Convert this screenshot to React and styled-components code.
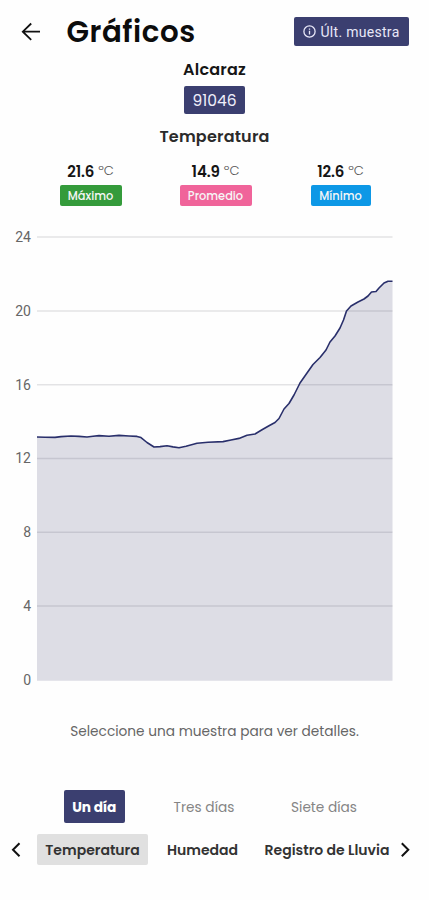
import { useState } from "react";
import styled, { createGlobalStyle } from "styled-components";

const stats = [
    { value: "21.6", label: "Máximo", color: "#349b3b", width: 62 },
    { value: "14.9", label: "Promedio", color: "#f0649a", width: 72 },
    { value: "12.6", label: "Mínimo", color: "#0d98e6", width: 60 },
];

const ranges = [
    { label: "Un día", width: 61.5 },
    { label: "Tres días", width: 77 },
    { label: "Siete días", width: 82 },
];

const sensors = [
    { label: "Temperatura", width: 111 },
    { label: "Humedad", width: 87 },
    { label: "Registro de Lluvia", width: 140 },
];

const ticks = [24, 20, 16, 12, 8, 4, 0];

// [x, y] in chart pixels, the plot is 355.5 x 443.5
const samples = [
    [0, 200], [8, 200.2], [18, 200.4], [24, 199.6], [34, 199], [42, 199.4],
    [50, 200], [56, 199.3], [62, 198.6], [72, 199.2], [82, 198.4], [92, 199],
    [100, 199.4], [104, 200.6], [110, 205.5], [117, 210], [123, 209.6],
    [130, 208.8], [136, 209.9], [142, 210.8], [149, 209.3], [160, 206.2],
    [171, 205.2], [186, 204.6], [194, 203], [202, 201.4], [210, 198.2],
    [218, 197], [225, 192.8], [232, 188.8], [238, 185.5], [242, 181.5],
    [247, 172], [252, 166.5], [257, 158], [263, 146], [270, 136],
    [276, 127.5], [283, 120.5], [289, 113], [293, 105], [298, 99],
    [303, 91], [306.5, 83], [309.5, 74], [314, 69], [321, 65],
    [327, 62], [331, 59], [334.5, 55], [339, 54.5], [342, 51],
    [347, 46], [351, 44.2], [355.5, 44.2],
];

const line = samples.map(([x, y]) => `${x},${y}`).join(" ");

const gridY = (tick) => 442.9 - tick * 18.45;

const Chart = () => (
    <ChartRow>
        <Axis>
            {ticks.map((tick) => <Tick key={tick}>{tick}</Tick>)}
        </Axis>
        <Plot width="356" height="445" viewBox="0 0 356 445">
            <g stroke="#e3e3e5" strokeWidth="1.5">
                {ticks.filter((tick) => tick > 0).map((tick) => (
                    <line key={tick} x1="0" x2="355.5" y1={gridY(tick)} y2={gridY(tick)} />
                ))}
            </g>
            <polygon points={`0,443.7 ${line} 355.5,443.7`} fill="#343869" fillOpacity="0.165" />
            <polyline points={line} fill="none" stroke="#292f6b" strokeWidth="1.6" strokeLinejoin="round" />
        </Plot>
    </ChartRow>
);

const Chevron = ({ d }) => (
    <svg width="10" height="16" viewBox="0 0 10 16" fill="none" stroke="#111" strokeWidth="2">
        <path d={d} />
    </svg>
);

const App = () => {
    const [range, setRange] = useState("Un día");
    const [sensor, setSensor] = useState("Temperatura");

    return (
        <Screen>
            <GlobalStyle />
            <Header>
                <svg width="20" height="20" viewBox="0 0 20 20" fill="none" stroke="#111" strokeWidth="1.8">
                    <path d="M19 9.7H2M10.2 1.5L1.8 9.7l8.4 8.2" />
                </svg>
                <Title>Gráficos</Title>
                <SampleButton>
                    <svg width="13" height="13" viewBox="0 0 13 13" fill="none" stroke="#e8e8f8" strokeWidth="1.3">
                        <circle cx="6.5" cy="6.5" r="5.6" />
                        <path d="M6.5 5.8v3.7M6.5 3.4v1.3" />
                    </svg>
                    Últ. muestra
                </SampleButton>
            </Header>
            <Station>
                <Name>Alcaraz</Name>
                <Code>91046</Code>
                <Variable>Temperatura</Variable>
            </Station>
            <Stats>
                {stats.map((stat) => (
                    <Stat key={stat.label}>
                        <Reading>
                            <Value>{stat.value}</Value>
                            <Unit>ºC</Unit>
                        </Reading>
                        <Badge $color={stat.color} $width={stat.width}>{stat.label}</Badge>
                    </Stat>
                ))}
            </Stats>
            <Chart />
            <Hint>Seleccione una muestra para ver detalles.</Hint>
            <Ranges>
                {ranges.map(({ label, width }) => (
                    <RangeButton
                        key={label}
                        $width={width}
                        $active={label === range}
                        onClick={() => setRange(label)}
                    >
                        {label}
                    </RangeButton>
                ))}
            </Ranges>
            <Sensors>
                <Chevron d="M8.5 1.2L2 7.7l6.5 6.5" />
                <SensorList>
                    {sensors.map(({ label, width }) => (
                        <SensorButton
                            key={label}
                            $width={width}
                            $active={label === sensor}
                            onClick={() => setSensor(label)}
                        >
                            {label}
                        </SensorButton>
                    ))}
                </SensorList>
                <Chevron d="M0.8 1.2L7.3 7.7l-6.5 6.5" />
            </Sensors>
        </Screen>
    );
}

const GlobalStyle = createGlobalStyle`
    body {
        margin: 0;
        background-color: #fefefe;
    }
    * {
        box-sizing: border-box;
    }
    button {
        border: none;
        padding: 0;
        white-space: nowrap;
    }
`

const Screen = styled.div`
    width: 429px;
    height: 900px;
    display: flex;
    flex-direction: column;
    overflow: hidden;
    font-family: Poppins, Inter, sans-serif;
    color: #151515;
`

const Header = styled.div`
    display: flex;
    align-items: center;
    height: 29px;
    margin-top: 17px;
    padding: 0 20px 0 21px;
`

const Title = styled.h1`
    margin: 0 auto 0 25.5px;
    font-size: 29.3px;
    line-height: 29px;
    font-weight: 600;
    letter-spacing: 0.55px;
    color: #0c0c0c;
`

const SampleButton = styled.button`
    display: flex;
    align-items: center;
    justify-content: center;
    gap: 4px;
    width: 115px;
    height: 29px;
    border-radius: 2px;
    background-color: #3b3f70;
    color: #e8e8f8;
    font: 400 14px Roboto, sans-serif;
    letter-spacing: 0.3px;
`

const Station = styled.div`
    display: flex;
    flex-direction: column;
    align-items: center;
    margin-top: 13px;
`

const Name = styled.div`
    height: 20px;
    line-height: 21px;
    font-size: 16px;
    font-weight: 600;
    letter-spacing: 0.2px;
`

const Code = styled.div`
    width: 61px;
    height: 28px;
    margin: 7px 0 12px;
    border-radius: 2px;
    background-color: #3b3f70;
    color: #eeeefa;
    font-size: 15.5px;
    line-height: 29px;
    text-align: center;
`

const Variable = styled.div`
    height: 20px;
    line-height: 21px;
    font-size: 16px;
    font-weight: 600;
    letter-spacing: 0.2px;
    color: #2b2b2b;
`

const Stats = styled.div`
    display: grid;
    grid-template-columns: repeat(3, 125px);
    margin: 15px 0 0 28px;
`

const Stat = styled.div`
    display: flex;
    flex-direction: column;
    align-items: center;
`

const Reading = styled.div`
    display: flex;
    align-items: center;
    gap: 4px;
    height: 20px;
    margin-bottom: 4px;
`

const Value = styled.span`
    font-size: 15px;
    font-weight: 600;
    letter-spacing: -0.1px;
`

const Unit = styled.span`
    font-size: 13px;
    font-weight: 300;
    color: #555;
`

const Badge = styled.div`
    width: ${props => props.$width}px;
    height: 21px;
    border-radius: 2px;
    background-color: ${props => props.$color};
    color: #f6f6f6;
    font-size: 11.4px;
    font-weight: 500;
    line-height: 22px;
    text-align: center;
`

const ChartRow = styled.div`
    display: flex;
    gap: 6px;
    margin-top: 31px;
    height: 445px;
`

const Plot = styled.svg`
    overflow: visible;
`

const Axis = styled.div`
    display: flex;
    flex-direction: column;
    justify-content: space-between;
    width: 31px;
    height: 459px;
    margin-top: -8px;
    text-align: right;
`

const Tick = styled.span`
    height: 16px;
    font: 14px/16px Roboto, sans-serif;
    color: #666;
`

const Hint = styled.div`
    margin-top: 40px;
    height: 20px;
    line-height: 20px;
    text-align: center;
    font-size: 13.7px;
    color: #666;
`

const Ranges = styled.div`
    display: flex;
    gap: 40.5px;
    margin: 48px 0 0 63.5px;
`

const RangeButton = styled.button`
    width: ${props => props.$width}px;
    height: 33px;
    padding-top: 2px;
    border-radius: 2px;
    background-color: ${props => props.$active ? "#3b3f70" : "transparent"};
    color: ${props => props.$active ? "#fff" : "#858585"};
    font: inherit;
    font-size: 13.7px;
    font-weight: ${props => props.$active ? 700 : 400};
    letter-spacing: ${props => props.$active ? -0.1 : 0}px;
`

const Sensors = styled.div`
    display: flex;
    align-items: center;
    justify-content: space-between;
    margin-top: 11px;
    padding: 0 18px 0 11px;
`

const SensorList = styled.div`
    display: flex;
    gap: 11px;
    margin-right: -12px;
`

const SensorButton = styled.button`
    width: ${props => props.$width}px;
    height: 31px;
    padding-top: 1px;
    border-radius: 2px;
    background-color: ${props => props.$active ? "#e0e0e0" : "transparent"};
    color: #333;
    font: inherit;
    font-size: 14px;
    font-weight: 600;
`

export default App;
